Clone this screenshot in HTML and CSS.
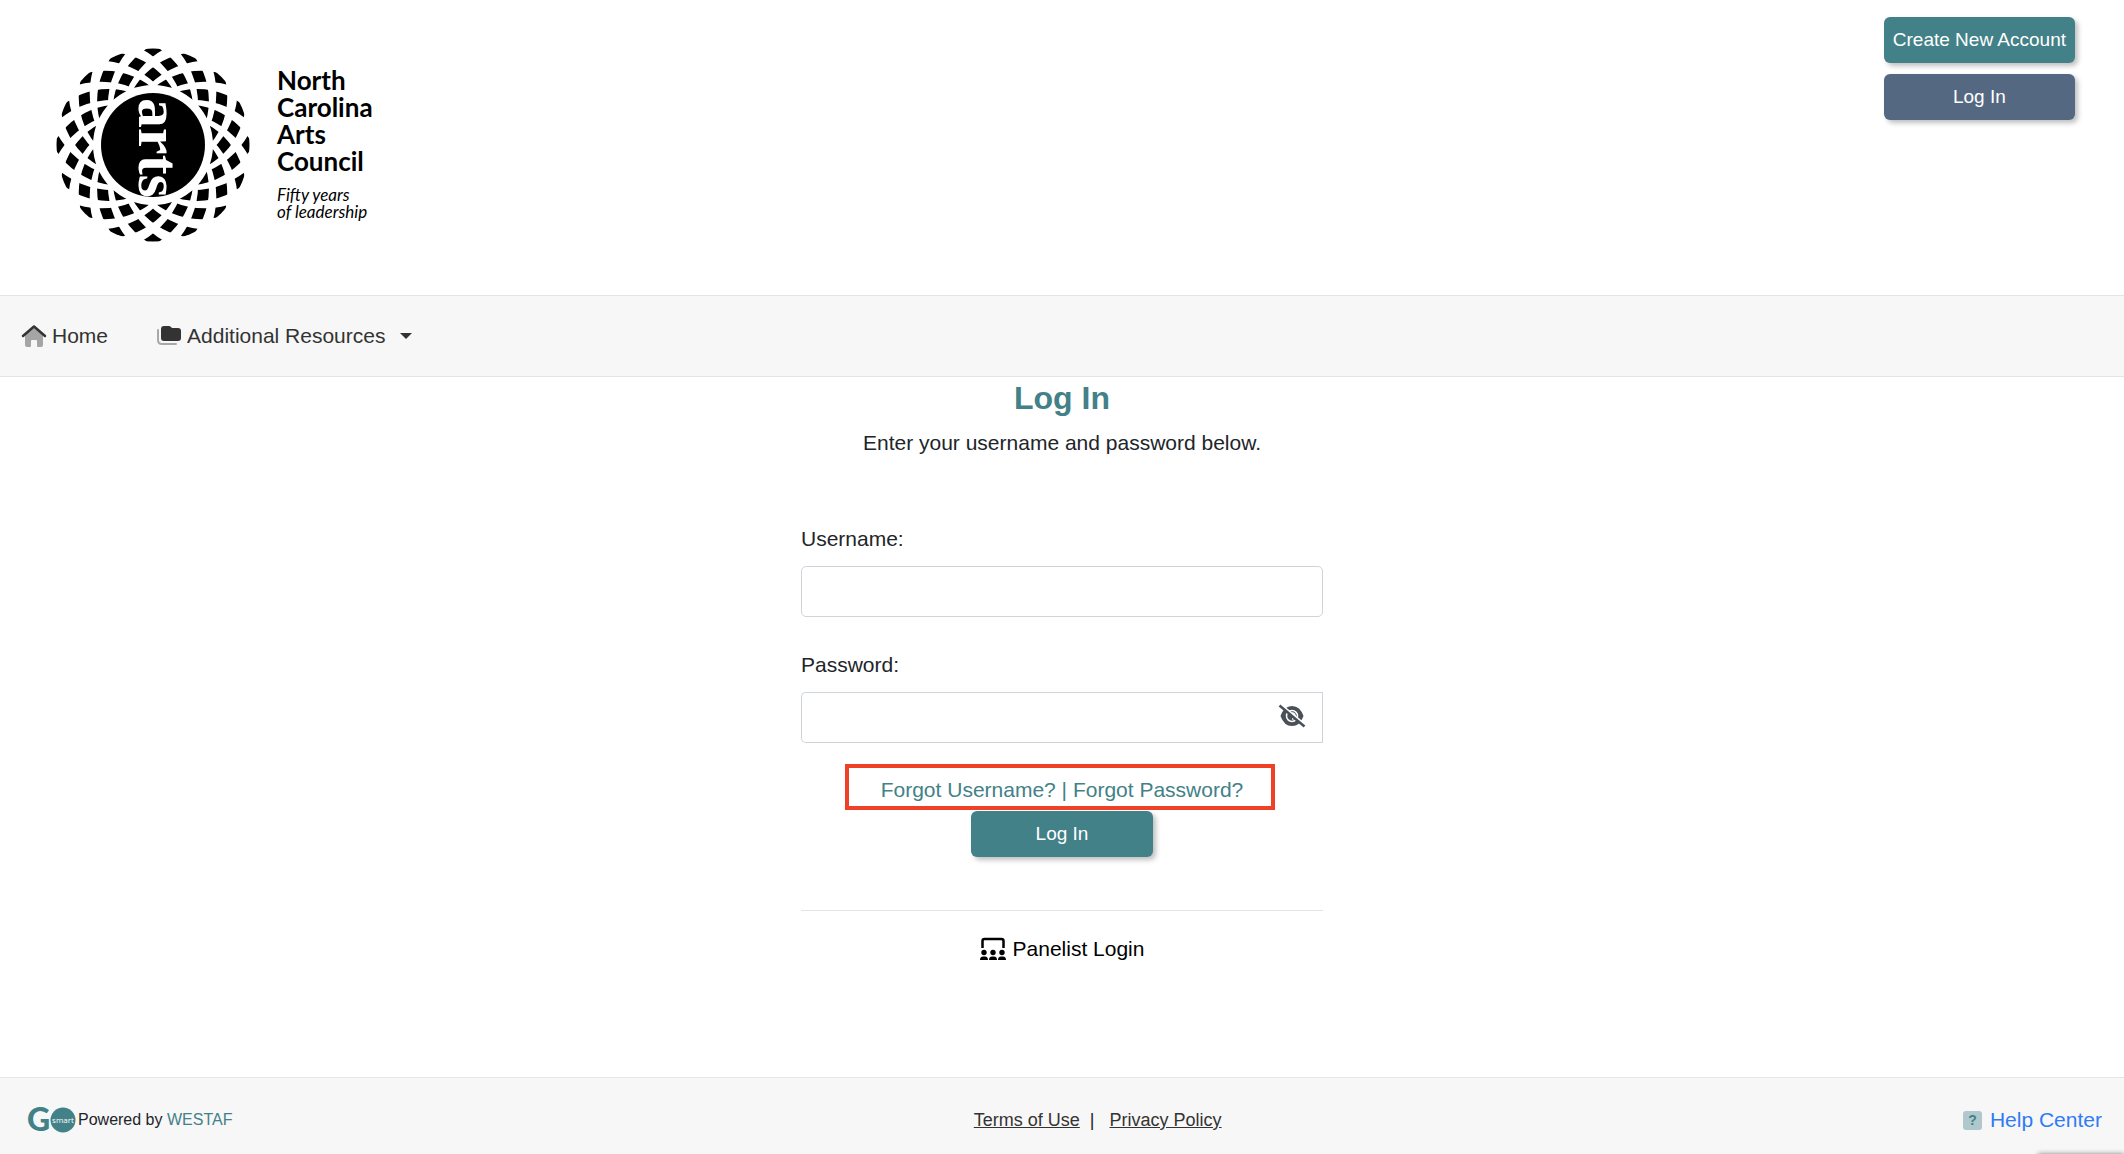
FILE: index.html
```html
<!DOCTYPE html>
<html lang="en">

<head>
    <meta charset="utf-8">
    <title>Log In</title>
    <link rel="stylesheet" href="styles.css">
</head>

<body>

    <!-- Logo and account buttons -->
    <header class="header">
        <a href="#" class="brand">
            <svg class="brand-mark" viewBox="-98 -98 196 196" aria-hidden="true">
                <defs>
                    <clipPath id="disc"><circle r="52" /></clipPath>
                    <clipPath id="wheel"><circle r="98" /></clipPath>
                    <!-- ring that gets thicker towards the rim -->
                    <path id="ring" fill-rule="evenodd" d="M-84.750 56a84.750 84.750 0 1 0 169.500 0a84.750 84.750 0 1 0 -169.500 0zM-74.250 48a74.250 74.250 0 1 0 148.500 0a74.250 74.250 0 1 0 -148.500 0z" />
                    <g id="rings">
                        <use href="#ring" />
                        <use href="#ring" transform="rotate(90)" />
                        <use href="#ring" transform="rotate(180)" />
                        <use href="#ring" transform="rotate(270)" />
                    </g>
                </defs>
                <circle r="96.500" />
                <g clip-path="url(#wheel)" fill="#fff">
                    <use href="#rings" />
                    <use href="#rings" transform="rotate(22.5)" />
                    <use href="#rings" transform="rotate(45)" />
                    <use href="#rings" transform="rotate(67.5)" />
                </g>
                <circle r="60" fill="#fff" />
                <circle r="52" />
                <g clip-path="url(#disc)">
                    <text class="brand-arts" transform="rotate(90)" x="-47" y="14">arts</text>
                </g>
            </svg>
            <span class="brand-text">
                <span class="brand-name">North<br>Carolina<br>Arts<br>Council</span>
                <span class="brand-tag">Fifty years<br>of leadership</span>
            </span>
        </a>
        <div class="account">
            <button type="button" class="btn">Create New Account</button>
            <button type="button" class="btn btn-alt">Log In</button>
        </div>
    </header>

    <nav class="nav">
        <a href="#" class="nav-link">
            <svg width="26" height="24" viewBox="0 0 26 24" aria-hidden="true">
                <path d="M4 11 13 4l9 7v10q0 2-2 2h-3q-1 0-1-1v-5q0-1-1-1h-4q-1 0-1 1v5q0 1-1 1H6q-2 0-2-2z" fill="#a5a5a5" />
                <path d="M2 12 13 2.500l11 9.500" fill="none" stroke="#333" stroke-width="2.500" stroke-linecap="round" stroke-linejoin="round" />
            </svg>
            Home
        </a>
        <a href="#" class="nav-link">
            <svg width="26" height="24" viewBox="0 0 26 24" aria-hidden="true">
                <path d="M2 6v10q0 4 4 4h14" fill="none" stroke="#a8a8a8" stroke-width="2" stroke-linecap="round" />
                <path d="M8 2h5q1 0 2 1l1 1h6q3 0 3 3v7q0 3-3 3H8q-3 0-3-3V5q0-3 3-3z" fill="#333" />
            </svg>
            Additional Resources
            <span class="caret"></span>
        </a>
    </nav>

    <main class="login">
        <h1>Log In</h1>
        <p class="intro">Enter your username and password below.</p>

        <form class="login-form">
            <label for="username">Username:</label>
            <input type="text" id="username" class="field">

            <label for="password">Password:</label>
            <div class="password">
                <input type="password" id="password" class="field">
                <button type="button" class="eye" aria-label="Show password">
                    <svg width="28" height="24" viewBox="0 0 28 24" aria-hidden="true">
                        <path d="M2.500 12Q6 2 14 2t11.500 10q-3.500 10-11.500 10T2.500 12z" fill="#495057" />
                        <circle cx="14" cy="12" r="5.500" fill="none" stroke="#fff" stroke-width="1.500" />
                        <path d="M14 9a3 3 0 0 1 0 6" fill="none" stroke="#fff" stroke-width="1.500" />
                        <path d="M3 .5 27 20.500" stroke="#fff" stroke-width="2" />
                        <path d="M1.500 1.500 26.500 22.500" stroke="#495057" stroke-width="2.500" />
                    </svg>
                </button>
            </div>

            <div class="forgot">
                <a href="#">Forgot Username?</a> | <a href="#">Forgot Password?</a>
                <span class="highlight"></span>
            </div>
            <button type="button" class="btn btn-submit">Log In</button>
        </form>

        <a href="#" class="panelist">
            <svg width="26" height="24" viewBox="0 0 26 24" aria-hidden="true">
                <path d="M2.500 11V4q0-2 2-2h17q2 0 2 2v7" fill="none" stroke="#000" stroke-width="2.500" />
                <circle cx="4" cy="15.500" r="2.700" />
                <circle cx="13" cy="15.500" r="2.700" />
                <circle cx="22" cy="15.500" r="2.700" />
                <path d="M0 23q0-3.500 3-3.500h2q3 0 3 3.500zM9 23q0-3.500 3-3.500h2q3 0 3 3.500zM18 23q0-3.500 3-3.500h2q3 0 3 3.500z" />
            </svg>
            Panelist Login
        </a>
    </main>

    <footer class="footer">
        <div class="powered">
            <svg class="go-logo" width="50" height="30" viewBox="0 0 50 30" aria-hidden="true">
                <text class="go-g" x="0" y="26">G</text>
                <circle cx="36" cy="15" r="12.500" fill="#428188" />
                <text class="go-smart" x="36" y="18">smart</text>
            </svg>
            <span>Powered by <a href="#">WESTAF</a></span>
        </div>
        <div class="legal">
            <a href="#">Terms of Use</a>
            <span>|</span>
            <a href="#">Privacy Policy</a>
        </div>
        <a href="#" class="help">
            <span class="help-icon">?</span>
            Help Center
        </a>
    </footer>

    <!-- Top edge of the badge docked under the window -->
    <div class="docked"></div>

</body>

</html>
```

FILE: styles.css
```css
* {
    box-sizing: border-box;
}

body {
    display: flex;
    flex-direction: column;
    min-height: 100vh;
    margin: 0;
    font-family: "Liberation Sans", Arial, sans-serif;
    font-size: 21px;
    line-height: 32px;
    color: #212529;
    background-color: white;
}

a {
    color: #428188;
    text-decoration: none;
}

.header {
    display: flex;
    justify-content: space-between;
    align-items: flex-start;
    padding: 17px 49px 52px 55px;
}

.brand {
    display: flex;
    gap: 26px;
    padding-top: 30px;
    color: black;
}

.brand-mark {
    width: 196px;
    height: 196px;
}

.brand-arts {
    font-family: "Liberation Serif", serif;
    font-size: 60px;
    font-weight: bold;
    fill: white;
}

.brand-text {
    padding-top: 20px;
    font-family: Lato, sans-serif;
}

.brand-name {
    display: block;
    font-size: 26px;
    font-weight: bold;
    line-height: 27px;
}

.brand-tag {
    display: block;
    margin-top: 11px;
    font-size: 17px;
    font-style: italic;
    line-height: 17px;
}

.account {
    display: flex;
    flex-direction: column;
    gap: 11px;
}

.btn {
    height: 46px;
    padding: 0 9px;
    font-family: inherit;
    font-size: 19px;
    color: white;
    background-color: #428188;
    border: none;
    border-radius: 6px;
    box-shadow: 3px 3px 5px rgba(0, 0, 0, 0.25);
}

.btn-alt {
    background-color: #556882;
}

.nav {
    display: flex;
    gap: 48px;
    padding: 24px 21px;
    background-color: #f7f7f7;
    border-top: 1px solid #e5e5e5;
    border-bottom: 1px solid #e5e5e5;
}

.nav-link {
    display: flex;
    align-items: center;
    gap: 5px;
    color: #333;
}

.caret {
    margin-left: 10px;
    border-top: 6px solid #333;
    border-left: 6px solid transparent;
    border-right: 6px solid transparent;
}

.login {
    display: flex;
    flex-direction: column;
    align-items: center;
    flex: 1;
    padding-top: 2px;
}

h1 {
    margin: 0;
    font-size: 32px;
    line-height: 38px;
    color: #428188;
}

.intro {
    margin: 10px 0 0;
}

.login-form {
    display: flex;
    flex-direction: column;
    width: 100%;
    max-width: 522px;
    margin-top: 32px;
    padding-bottom: 53px;
    border-bottom: 1px solid #e3e3e3;
}

label {
    margin-top: 32px;
    margin-bottom: 11px;
}

.field {
    width: 100%;
    height: 51px;
    padding: 8px 16px;
    font-family: inherit;
    font-size: 21px;
    border: 1px solid #ced4da;
    border-radius: 5px;
}

.password {
    display: flex;
}

.password .field {
    border-right: none;
    border-radius: 5px 0 0 5px;
}

.eye {
    display: flex;
    align-items: center;
    padding: 0 16px 4px;
    background-color: white;
    border: 1px solid #ced4da;
    border-left: none;
}

.forgot {
    position: relative;
    align-self: center;
    margin-top: 31px;
    color: #428188;
}

.highlight {
    position: absolute;
    top: -10px;
    right: -32px;
    bottom: -4px;
    left: -36px;
    border: 4px solid #ef4128;
    pointer-events: none;
}

.btn-submit {
    align-self: center;
    width: 182px;
    margin-top: 5px;
}

.panelist {
    display: flex;
    align-items: center;
    gap: 7px;
    margin-top: 22px;
    color: black;
}

.footer {
    display: flex;
    justify-content: space-between;
    align-items: center;
    padding: 26px 22px 18px 27px;
    background-color: #f7f7f7;
    border-top: 1px solid #e5e5e5;
}

.powered {
    display: flex;
    align-items: center;
    gap: 1px;
    font-size: 16px;
}

.go-logo {
    overflow: visible;
}

.go-g {
    font-family: Lato, sans-serif;
    font-size: 32px;
    font-weight: 900;
    fill: #428188;
}

.go-smart {
    font-family: "Open Sans", sans-serif;
    font-size: 8px;
    text-anchor: middle;
    fill: white;
}

.legal {
    display: flex;
    gap: 10px;
    font-size: 18px;
}

.legal span {
    margin-right: 5px;
}

.legal a {
    color: #333;
    text-decoration: underline;
}

.help {
    display: flex;
    align-items: center;
    gap: 8px;
    color: #2f7bf6;
}

.help-icon {
    width: 19px;
    height: 19px;
    font-size: 14px;
    font-weight: bold;
    line-height: 19px;
    text-align: center;
    color: #428188;
    background-color: #afc8cb;
    border-radius: 3px;
}

.docked {
    position: fixed;
    right: 0;
    bottom: -60px;
    width: 86px;
    height: 60px;
    box-shadow: 0 0 5px gray;
}
```
